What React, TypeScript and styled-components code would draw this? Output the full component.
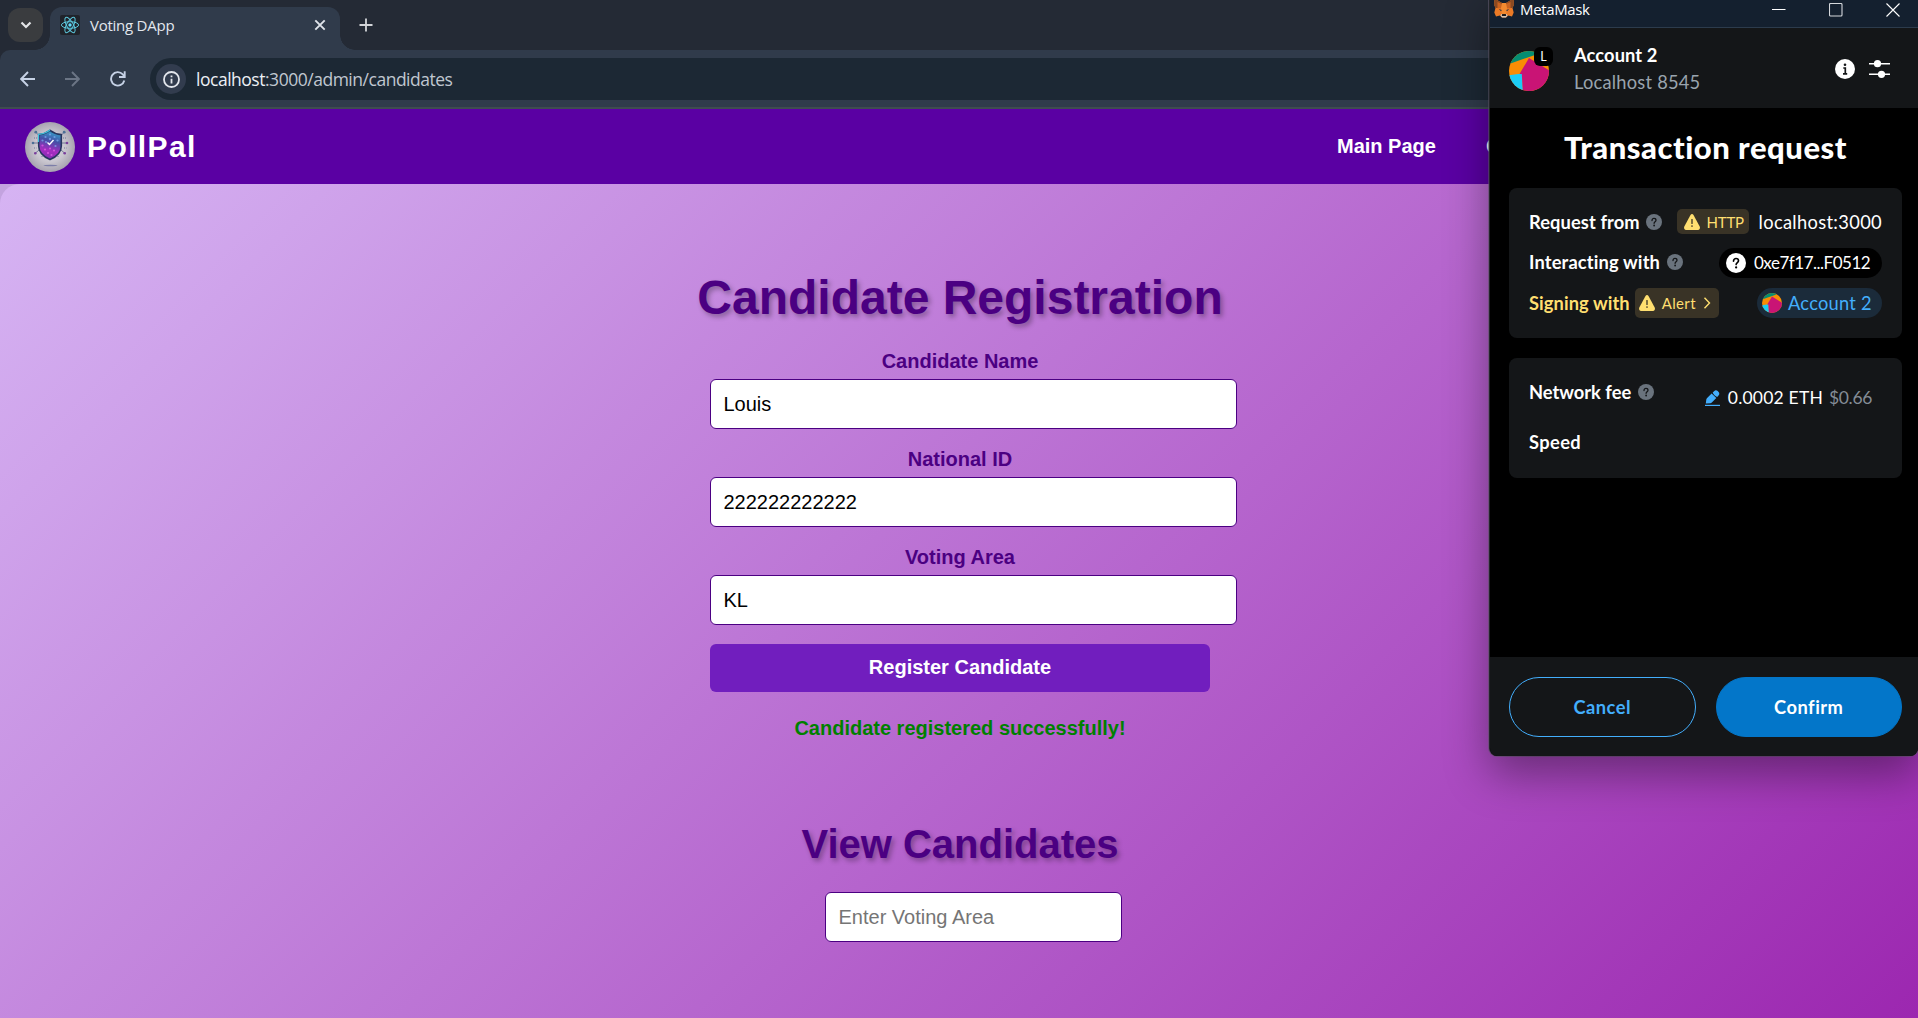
import React from 'react';
import styled, { createGlobalStyle } from 'styled-components';

const GlobalStyle = createGlobalStyle`
  * { box-sizing: border-box; }
  html, body { margin: 0; padding: 0; overflow: hidden; }
  body { font-family: "Liberation Sans", Arial, sans-serif; }
  svg { display: block; flex: none; }
`;

const Desktop = styled.div`
  position: relative;
  display: flex;
  flex-direction: column;
  width: 1918px;
  height: 1018px;
  overflow: hidden;
`;

/* ---------- browser ---------- */

const TabStrip = styled.div`
  display: flex;
  align-items: flex-start;
  height: 50px;
  padding-left: 8px;
  background: #242a35;
`;

const TabSearch = styled.button`
  display: grid;
  place-items: center;
  width: 35px;
  height: 34px;
  margin: 8px 7px 0 0;
  padding: 0;
  border: 0;
  border-radius: 12px;
  background: #3a3c3f;
`;

const Tab = styled.div`
  position: relative;
  display: flex;
  align-items: center;
  width: 290px;
  height: 43px;
  margin-top: 7px;
  padding: 0 12px 7px 10px;
  border-radius: 12px 12px 0 0;
  background: #303b4b;

  &::before,
  &::after {
    content: '';
    position: absolute;
    bottom: 0;
    width: 15px;
    height: 15px;
  }
  &::before {
    left: -15px;
    background: radial-gradient(circle at 0 0, transparent 14.5px, #303b4b 15px);
  }
  &::after {
    right: -15px;
    background: radial-gradient(circle at 100% 0, transparent 14.5px, #303b4b 15px);
  }
`;

const TabTitle = styled.span`
  flex: 1;
  margin-left: 10px;
  color: #e3e7ee;
  font: 400 15px/20px "Open Sans", sans-serif;
  letter-spacing: -0.25px;
`;

const NewTab = styled.span`
  margin: 18px 0 0 19px;
`;

const ToolbarBack = styled.div`
  background: #242a35;
`;

const Toolbar = styled.div`
  display: flex;
  align-items: center;
  height: 59px;
  padding: 1px 0 0 20px;
  border-bottom: 2px solid #3f4c50;
  border-radius: 10px 0 0 0;
  background: #303b4b;
`;

const ToolButton = styled.span`
  display: grid;
  place-items: center;
  width: 15px;
  height: 24px;
  margin-right: 30px;
`;

const AddressBar = styled.div`
  display: flex;
  flex: 1;
  align-items: center;
  height: 42px;
  margin-left: -5px;
  padding-left: 6px;
  border-radius: 21px 0 0 21px;
  background: #1c2834;
`;

const SiteInfo = styled.span`
  display: grid;
  place-items: center;
  width: 30px;
  height: 30px;
  margin-right: 10px;
  border-radius: 50%;
  background: #323c4e;
`;

const Url = styled.span`
  color: #c0c7d0;
  font: 400 17.5px/24px "Open Sans", sans-serif;
  letter-spacing: -0.48px;
`;

const UrlHost = styled.span`
  color: #eceff4;
`;

/* ---------- voting page ---------- */

const NavBar = styled.nav`
  display: flex;
  align-items: center;
  height: 75px;
  padding-left: 25px;
  background: #5a00a3;
`;

const Brand = styled.span`
  margin-left: 12px;
  color: #fff;
  font-size: 30px;
  font-weight: 700;
  line-height: 34px;
  letter-spacing: 1.4px;
`;

const NavLinks = styled.div`
  display: flex;
  gap: 50px;
  width: 581px;
  margin: 0 0 2px auto;
`;

const NavLink = styled.a`
  color: #fff;
  font-size: 20px;
  font-weight: 700;
  line-height: 24px;
`;

const PageBack = styled.div`
  flex: 1;
  background: #c3a3df;
`;

const Page = styled.main`
  display: flex;
  flex-direction: column;
  align-items: center;
  height: 834px;
  padding: 86px 0 0 2px;
  border-radius: 20px 0 0 0;
  background: linear-gradient(135deg, #d6b4f3 0%, #9c27b0 100%);
`;

const Heading = styled.h1<{ $size: number; $line: number }>`
  margin: 0;
  color: #4b0082;
  font-size: ${(p) => p.$size}px;
  font-weight: 700;
  line-height: ${(p) => p.$line}px;
  text-shadow: 2.5px 2.5px 5px rgba(0, 0, 0, 0.3);
`;

const Form = styled.form`
  display: flex;
  flex-direction: column;
  width: 500px;
  margin-top: 23px;
`;

const Label = styled.label`
  margin-bottom: 6px;
  color: #4b0082;
  font-size: 20px;
  font-weight: 700;
  line-height: 24px;
  text-align: center;
`;

const TextInput = styled.input<{ $width: number }>`
  width: ${(p) => p.$width}px;
  height: 50px;
  margin: 0 0 18px;
  padding: 0 12.5px;
  border: 1px solid #4b0082;
  border-radius: 6px;
  outline: 0;
  background: #fff;
  color: #000;
  font: 400 20px "Liberation Sans", Arial, sans-serif;

  &::placeholder { color: #757575; }
`;

const Submit = styled.button`
  height: 48px;
  margin-top: 1px;
  padding: 0 0 2px;
  border: 0;
  border-radius: 6px;
  background: #711ebe;
  color: #fff;
  font: 700 20px "Liberation Sans", Arial, sans-serif;
`;

const Success = styled.p`
  margin: 24px 0 81px;
  color: #008000;
  font-size: 20px;
  font-weight: 700;
  line-height: 24px;
`;

const Search = styled.div`
  width: 270px;
  margin-top: 25px;
`;

/* ---------- wallet window ---------- */

const Wallet = styled.section`
  position: absolute;
  top: 0;
  left: 1489px;
  display: flex;
  flex-direction: column;
  width: 429px;
  height: 756px;
  overflow: hidden;
  border-left: 1px solid #23252a;
  border-radius: 0 0 8px 8px;
  background: #000;
  color: #fff;
  font-family: Lato, sans-serif;
`;

/* the soft shadow the wallet window casts on the browser */
const WalletShadow = styled.div`
  position: absolute;
  top: -10px;
  left: 1489px;
  width: 429px;
  height: 766px;
  border-radius: 8px;
  box-shadow: 0 18px 44px rgba(0, 0, 0, 0.38), 0 0 0 1px rgba(110, 100, 120, 0.55);
`;

const TitleBar = styled.div`
  display: flex;
  align-items: flex-start;
  height: 28px;
  padding-left: 4px;
  border-bottom: 1px solid #2c3b4c;
  background: #14202f;
`;

const WindowTitle = styled.span`
  flex: 1;
  margin-left: 6px;
  font: 400 15px/19px "Open Sans", sans-serif;
  letter-spacing: -0.35px;
`;

const WindowControls = styled.div`
  display: flex;
  gap: 43px;
  padding: 3px 18px 0 0;
`;

const AccountBar = styled.header`
  display: flex;
  align-items: center;
  height: 80px;
  padding: 0 28px 0 19px;
  background: #141618;
`;

const AvatarBox = styled.div`
  position: relative;
  margin-top: 5px;
`;

const NetworkBadge = styled.span`
  position: absolute;
  top: -4px;
  left: 25px;
  display: grid;
  place-items: center;
  width: 19px;
  height: 19px;
  border-radius: 6px;
  background: #000;
  font-size: 12.5px;
  line-height: 19px;
`;

const AccountText = styled.div`
  display: flex;
  flex: 1;
  flex-direction: column;
  gap: 3px;
  margin-left: 25px;
`;

const HeaderIcons = styled.div`
  display: flex;
  align-items: center;
  gap: 14px;
  padding-top: 1px;
`;

const Text = styled.span<{
  $color?: string;
  $weight?: number;
  $size?: number;
  $track?: number;
}>`
  color: ${(p) => p.$color ?? '#fff'};
  font-size: ${(p) => p.$size ?? 18.3}px;
  font-weight: ${(p) => p.$weight ?? 400};
  line-height: 24px;
  letter-spacing: ${(p) => p.$track ?? 0.15}px;
  white-space: nowrap;
`;

const WalletBody = styled.div`
  display: flex;
  flex: 1;
  flex-direction: column;
  padding: 21px 16px 0 19px;
`;

const WalletHeading = styled.h2`
  margin: 0 0 23px;
  font-size: 31px;
  font-weight: 900;
  line-height: 36px;
  letter-spacing: 0.52px;
  text-align: center;
`;

const RequestCard = styled.div`
  display: grid;
  grid-template-rows: 31px 30px 30px;
  gap: 10px;
  height: 150px;
  padding: 19px 20px 0;
  border-radius: 8px;
  background: #141618;
`;

const CardRow = styled.div<{ $lift?: number }>`
  display: flex;
  align-items: center;
  justify-content: space-between;
  padding-bottom: ${(p) => p.$lift ?? 0}px;
`;

const LabelGroup = styled.div<{ $gap: number; $drop?: number }>`
  display: flex;
  align-items: center;
  gap: ${(p) => p.$gap}px;
  height: 24px;
  margin-bottom: ${(p) => 2 - (p.$drop ?? 0)}px;
`;

const ValueGroup = styled.div`
  display: flex;
  align-items: center;
  gap: 10px;
`;

const AlertChip = styled.span<{ $height: number; $width: number; $inset: number }>`
  display: flex;
  flex: none;
  align-items: center;
  gap: 7px;
  width: ${(p) => p.$width}px;
  height: ${(p) => p.$height}px;
  padding-left: ${(p) => p.$inset}px;
  border-radius: 5px;
  background: #393326;
`;

const Pill = styled.span<{ $bg: string; $left: number; $width: number; $gap: number }>`
  display: flex;
  align-items: center;
  gap: ${(p) => p.$gap}px;
  width: ${(p) => p.$width}px;
  height: 30px;
  padding-left: ${(p) => p.$left}px;
  border-radius: 15px;
  background: ${(p) => p.$bg};
`;

const FeeCard = styled.div`
  display: flex;
  flex-direction: column;
  gap: 26px;
  height: 120px;
  margin-top: 20px;
  padding: 22px 30px 0 20px;
  border-radius: 8px;
  background: #141618;
`;

const FeeRow = styled.div`
  display: flex;
  align-items: flex-start;
  justify-content: space-between;
  height: 24px;
`;

const FeeValue = styled.div`
  display: flex;
  align-items: center;
  margin-top: 6px;
`;

const FeeAmount = styled(Text)`
  margin: 0 6px 0 8px;
`;

const WalletFooter = styled.footer`
  display: flex;
  gap: 20px;
  height: 99px;
  padding: 20px 16px 0 19px;
  background: #141618;
`;

const WalletButton = styled.button<{ $primary?: boolean }>`
  flex: 1;
  height: 60px;
  padding: 0;
  border: 1px solid ${(p) => (p.$primary ? '#0376c9' : '#43aefc')};
  border-radius: 30px;
  background: ${(p) => (p.$primary ? '#0376c9' : 'transparent')};
  color: ${(p) => (p.$primary ? '#fff' : '#43aefc')};
  font: 700 18.3px/24px Lato, sans-serif;
  letter-spacing: 0.5px;
`;

/* ---------- drawings ---------- */

const ReactFavicon = () => (
  <svg width="20" height="20" viewBox="0 0 20 20">
    <rect width="20" height="20" rx="2" fill="#20232a" />
    <g fill="none" stroke="#5cc7dc" strokeWidth="1">
      <ellipse cx="10" cy="10" rx="8.6" ry="3.3" />
      <ellipse cx="10" cy="10" rx="8.6" ry="3.3" transform="rotate(60 10 10)" />
      <ellipse cx="10" cy="10" rx="8.6" ry="3.3" transform="rotate(120 10 10)" />
    </g>
    <circle cx="10" cy="10" r="1.7" fill="#61dafb" />
  </svg>
);

const PollPalLogo = () => (
  <svg width="50" height="50" viewBox="0 0 50 50">
    <defs>
      <radialGradient id="disc">
        <stop offset="0" stopColor="#e4e2e8" />
        <stop offset="0.6" stopColor="#c9c6cf" />
        <stop offset="1" stopColor="#a7a3b0" />
      </radialGradient>
      <linearGradient id="shield" x1="0.6" y1="0" x2="0.4" y2="1">
        <stop offset="0" stopColor="#35a9cf" />
        <stop offset="0.35" stopColor="#4450a6" />
        <stop offset="0.7" stopColor="#a52cc0" />
        <stop offset="1" stopColor="#7f2fb0" />
      </linearGradient>
    </defs>
    <circle cx="25" cy="25" r="25" fill="url(#disc)" />
    <g stroke="#5b6488" strokeWidth="0.8" fill="none">
      <path d="M15 14.5 L11 10.5 M35 14.5 L39 10.5 M13 21 H8 M37 21 H42 M14 28 L10.5 31 M36 28 L39.5 31" />
      <path d="M9 16h3M38 16h3M9 26h2.500M39 26h2.500M17 34v2M33 34v2" strokeDasharray="1 1" />
    </g>
    <g fill="#4c6f96">
      <circle cx="10.800" cy="10.200" r="1.400" />
      <circle cx="39.200" cy="10.200" r="1.400" />
      <circle cx="8" cy="21" r="1.300" />
    </g>
    <g fill="#7a3f9c">
      <circle cx="42" cy="21" r="1.300" />
      <circle cx="10.300" cy="31.200" r="1.300" />
      <circle cx="39.700" cy="31.200" r="1.300" />
    </g>
    <path d="M25 8.300 C28.500 11 32.500 12.200 36.300 12.600 V24 C36.300 30.500 31 35 25 37.600 C19 35 13.700 30.500 13.700 24 V12.600 C17.500 12.200 21.500 11 25 8.300Z" fill="url(#shield)" stroke="#26355f" strokeWidth="1.600" />
    <path d="M25 8 C21.500 10.800 17.500 12 13.500 12.400 V20" fill="none" stroke="#3ec2dc" strokeWidth="1.100" />
    <g fill="#7ea9ee" opacity="0.75">
      <circle cx="25" cy="12.500" r="1.100" />
      <circle cx="20.500" cy="15" r="1.100" />
      <circle cx="29.500" cy="15" r="1.100" />
      <circle cx="25" cy="17" r="1.200" />
      <circle cx="17.500" cy="18.500" r="1.100" />
      <circle cx="32.500" cy="18.500" r="1.100" />
      <circle cx="21" cy="20" r="1.100" />
      <circle cx="30.500" cy="24" r="1.100" />
    </g>
    <g fill="#e05be6" opacity="0.8">
      <circle cx="17.500" cy="23.500" r="1.100" />
      <circle cx="20" cy="27.500" r="1.100" />
      <circle cx="25" cy="26.500" r="1.100" />
      <circle cx="29" cy="28.500" r="1.100" />
      <circle cx="23" cy="31" r="1.100" />
      <circle cx="26.500" cy="33" r="1.100" />
    </g>
    <path d="M22.500 20.500l2 2 4-4.500" fill="none" stroke="#fff" strokeWidth="1.400" />
    <ellipse cx="25.500" cy="43.500" rx="7" ry="0.700" fill="#7c7ea8" />
  </svg>
);

const FoxIcon = () => (
  <svg width="20" height="18" viewBox="0 0 20 18">
    <path d="M0.500 0 L3 0 L8 3 H12 L17 0 H19.500 L20 4.500 L18.500 8 L19.700 12.500 L18 16.500 L14.200 15.500 L12 17.600 H8 L5.800 15.500 L2 16.500 L0.300 12.500 L1.500 8 L0 4.500Z" fill="#ea7a26" />
    <path d="M0.500 0 H3 L8 3 L7 8 L1.500 8 L0 4.500Z M19.500 0 H17 L12 3 L13 8 L18.500 8 L20 4.500Z" fill="#8a4a22" />
    <path d="M3.500 2 L8 4 L7 8.200 L3.500 8.200 Z M16.500 2 L12 4 L13 8.200 L16.500 8.200Z" fill="#c96421" />
    <path d="M8 3 H12 L13 8.200 L12 14 H8 L7 8.200Z" fill="#f28a30" />
    <path d="M4.800 9 L7.800 10 L7 11.300Z M15.200 9 L12.200 10 L13 11.300Z" fill="#23344a" />
    <path d="M7.500 14 H12.500 L13.500 15.600 L12 17.600 H8 L6.500 15.600Z" fill="#d6c6b8" />
    <path d="M8.200 14 H11.800 L12.200 16 H7.800Z" fill="#1d1a1a" />
  </svg>
);

const Jazzicon = ({ size, id }: { size: number; id: string }) => (
  <svg width={size} height={size} viewBox="0 0 40 40">
    <clipPath id={id}>
      <circle cx="20" cy="20" r="20" />
    </clipPath>
    <g clipPath={`url(#${id})`}>
      <rect width="40" height="40" fill="#f98d04" />
      <path d="M0 13 L26 4 L40 -4 L0 -4Z" fill="#058e72" />
      <path d="M-1 24.500 L13 22.500 L14 42 H-1Z" fill="#1ccdf5" />
      <path d="M10.500 23 L20 7 L42 20.500 V42 H14 L12.800 23Z" fill="#c91475" />
    </g>
  </svg>
);

const HelpIcon = ({ size = 16, bg = '#6a737d', fg = '#141618' }: { size?: number; bg?: string; fg?: string }) => (
  <svg width={size} height={size} viewBox="0 0 16 16">
    <circle cx="8" cy="8" r="8" fill={bg} />
    <path d="M6 6.500 C6 5.200 6.900 4.400 8 4.400 C9.200 4.400 10 5.200 10 6.200 C10 7.600 8.100 7.700 8.100 9.300" fill="none" stroke={fg} strokeWidth="1.300" strokeLinecap="round" />
    <circle cx="8.100" cy="11.500" r="0.900" fill={fg} />
  </svg>
);

const WarningIcon = () => (
  <svg width="16" height="16" viewBox="0 0 16 16">
    <path d="M6.500 0.900 C7.200 -0.300 8.800 -0.300 9.500 0.900 L15.700 12.600 C16.400 14.100 15.600 16 14 16 H2 C0.400 16 -0.400 14.100 0.300 12.600Z" fill="#ffdf70" />
    <path d="M8 5.600 V9.400" stroke="#393326" strokeWidth="1.300" strokeLinecap="round" />
    <circle cx="8" cy="12" r="0.850" fill="#393326" />
  </svg>
);

const EditIcon = () => (
  <svg width="15" height="16" viewBox="0 0 15 16">
    <path d="M0.800 13.600 L1.300 9.600 C1.400 9 1.700 8.500 2.100 8.100 L6.600 3.500 L11.300 8 L6.800 12.400 C6.400 12.800 5.900 13.100 5.300 13.200Z" fill="#43aefc" />
    <path d="M7.700 2.500 L9.300 0.900 C10.200 -0.100 11.700 0 12.700 1 L13.600 1.900 C14.500 2.900 14.600 4.300 13.700 5.300 L12.200 6.900 C10.200 6.200 8.500 4.600 7.700 2.500Z" fill="#43aefc" />
    <path d="M0 15.400 H15" stroke="#43aefc" strokeWidth="1.200" />
  </svg>
);

const NetworkSliders = () => (
  <svg width="21" height="20" viewBox="0 0 21 20" stroke="#fff" fill="#fff">
    <path d="M0 4.700 H21 M0 15.300 H21" strokeWidth="1.400" />
    <circle cx="8.500" cy="4.700" r="3.600" stroke="none" />
    <circle cx="12.500" cy="15.300" r="3.600" stroke="none" />
  </svg>
);

const InfoSolid = () => (
  <svg width="20" height="20" viewBox="0 0 20 20">
    <circle cx="10" cy="10" r="10" fill="#fff" />
    <circle cx="10" cy="5.800" r="1.300" fill="#141618" />
    <path d="M8.300 9 H10.300 V14.500 M8 14.800 H12.200" fill="none" stroke="#141618" strokeWidth="1.700" />
  </svg>
);

const Chrome = () => (
  <>
    <TabStrip>
      <TabSearch>
        <svg width="12" height="8" viewBox="0 0 12 8">
          <path d="M1.500 1.500 L6 6 L10.500 1.500" fill="none" stroke="#e3e5e8" strokeWidth="2.200" />
        </svg>
      </TabSearch>
      <Tab>
        <ReactFavicon />
        <TabTitle>Voting DApp</TabTitle>
        <svg width="16" height="12" viewBox="0 0 16 12">
          <path d="M3.300 1.300 L12.700 10.700 M12.700 1.300 L3.300 10.700" stroke="#dfe3ea" strokeWidth="1.900" />
        </svg>
      </Tab>
      <NewTab>
        <svg width="14" height="14" viewBox="0 0 14 14">
          <path d="M7 0.500 V13.500 M0.500 7 H13.500" stroke="#d3d5d9" strokeWidth="1.800" />
        </svg>
      </NewTab>
    </TabStrip>
    <ToolbarBack>
      <Toolbar>
        <ToolButton>
          <svg width="15" height="16" viewBox="0 0 15 16">
            <path d="M15 8 H1.500 M8 1 L1.200 8 L8 15" fill="none" stroke="#c6d2e6" strokeWidth="1.900" />
          </svg>
        </ToolButton>
        <ToolButton>
          <svg width="15" height="16" viewBox="0 0 15 16">
            <path d="M0 8 H13.500 M7 1 L13.800 8 L7 15" fill="none" stroke="#6b7585" strokeWidth="1.900" />
          </svg>
        </ToolButton>
        <ToolButton>
          <svg width="16" height="16" viewBox="0 0 16 16">
            <path d="M14.300 9.500 A6.700 6.700 0 1 1 12.800 3.400 L14.500 5.500" fill="none" stroke="#c6d2e6" strokeWidth="1.900" />
            <path d="M14.700 0.300 V6 H9" fill="none" stroke="#c6d2e6" strokeWidth="1.900" />
          </svg>
        </ToolButton>
        <AddressBar>
          <SiteInfo>
            <svg width="17" height="17" viewBox="0 0 17 17">
              <circle cx="8.500" cy="8.500" r="7.500" fill="none" stroke="#e3e6ec" strokeWidth="1.800" />
              <path d="M8.500 7.700 V12.500 M8.500 4.400 V6.200" stroke="#e3e6ec" strokeWidth="1.800" />
            </svg>
          </SiteInfo>
          <Url>
            <UrlHost>localhost</UrlHost>:3000/admin/candidates
          </Url>
        </AddressBar>
      </Toolbar>
    </ToolbarBack>
  </>
);

const fields = [
  { label: 'Candidate Name', value: 'Louis' },
  { label: 'National ID', value: '222222222222' },
  { label: 'Voting Area', value: 'KL' },
];

const VotingPage = () => (
  <>
    <NavBar>
      <PollPalLogo />
      <Brand>PollPal</Brand>
      <NavLinks>
        <NavLink>Main Page</NavLink>
        <NavLink>C</NavLink>
      </NavLinks>
    </NavBar>
    <PageBack>
      <Page>
        <Heading $size={48} $line={56}>Candidate Registration</Heading>
        <Form>
          {fields.map((f) => (
            <React.Fragment key={f.label}>
              <Label>{f.label}</Label>
              <TextInput $width={527} defaultValue={f.value} />
            </React.Fragment>
          ))}
          <Submit type="button">Register Candidate</Submit>
        </Form>
        <Success>Candidate registered successfully!</Success>
        <Heading as="h2" $size={40} $line={46}>View Candidates</Heading>
        <Search>
          <TextInput $width={297} placeholder="Enter Voting Area" />
        </Search>
      </Page>
    </PageBack>
  </>
);

const MetaMaskWindow = () => (
  <Wallet>
    <TitleBar>
      <FoxIcon />
      <WindowTitle>MetaMask</WindowTitle>
      <WindowControls>
        <svg width="14" height="14" viewBox="0 0 14 14">
          <path d="M0 6.500 H13.500" stroke="#fff" strokeWidth="1" />
        </svg>
        <svg width="14" height="14" viewBox="0 0 14 14">
          <rect x="0.500" y="0.500" width="12.500" height="12.500" rx="1" fill="none" stroke="#d5d8dc" strokeWidth="1.100" />
        </svg>
        <svg width="14" height="14" viewBox="0 0 14 14">
          <path d="M0.500 0.500 L13.500 13.500 M13.500 0.500 L0.500 13.500" stroke="#fff" strokeWidth="1.100" />
        </svg>
      </WindowControls>
    </TitleBar>
    <AccountBar>
      <AvatarBox>
        <Jazzicon size={40} id="avatar-large" />
        <NetworkBadge>L</NetworkBadge>
      </AvatarBox>
      <AccountText>
        <Text $weight={700} $track={0.1}>Account 2</Text>
        <Text $color="#9aa4ae" $track={0.22}>Localhost 8545</Text>
      </AccountText>
      <HeaderIcons>
        <InfoSolid />
        <NetworkSliders />
      </HeaderIcons>
    </AccountBar>
    <WalletBody>
      <WalletHeading>Transaction request</WalletHeading>
      <RequestCard>
        <CardRow $lift={2}>
          <LabelGroup $gap={6} $drop={2}>
            <Text $weight={700} $track={0.1}>Request from</Text>
            <HelpIcon />
          </LabelGroup>
          <ValueGroup>
            <AlertChip $height={25} $width={72} $inset={7}>
              <WarningIcon />
              <Text $color="#ffdf70" $size={15} $track={-0.2}>HTTP</Text>
            </AlertChip>
            <Text $track={0.33}>localhost:3000</Text>
          </ValueGroup>
        </CardRow>
        <CardRow>
          <LabelGroup $gap={7}>
            <Text $weight={700}>Interacting with</Text>
            <HelpIcon />
          </LabelGroup>
          <Pill $bg="#000" $left={7} $width={163} $gap={8}>
            <HelpIcon size={20} bg="#fff" fg="#000" />
            <Text $size={17} $track={-0.49}>0xe7f17...F0512</Text>
          </Pill>
        </CardRow>
        <CardRow>
          <LabelGroup $gap={5} $drop={2}>
            <Text $weight={700} $color="#ffdf70" $track={0.08}>Signing with</Text>
            <AlertChip $height={30} $width={84} $inset={4}>
              <WarningIcon />
              <Text $color="#ffdf70" $size={15} $track={0.36}>Alert</Text>
              <svg width="8" height="12" viewBox="0 0 8 12">
                <path d="M1.500 0.800 L6.500 6 L1.500 11.200" fill="none" stroke="#ffdf70" strokeWidth="1.400" />
              </svg>
            </AlertChip>
          </LabelGroup>
          <Pill $bg="#1b2b3a" $left={5} $width={125} $gap={6}>
            <Jazzicon size={20} id="avatar-small" />
            <Text $color="#43aefc" $track={0.22}>Account 2</Text>
          </Pill>
        </CardRow>
      </RequestCard>
      <FeeCard>
        <FeeRow>
          <LabelGroup $gap={7}>
            <Text $weight={700} $track={0}>Network fee</Text>
            <HelpIcon />
          </LabelGroup>
          <FeeValue>
            <EditIcon />
            <FeeAmount $size={17.5} $track={0.2}>0.0002 ETH</FeeAmount>
            <Text $color="#848c96" $size={17.5} $track={-0.35}>$0.66</Text>
          </FeeValue>
        </FeeRow>
        <FeeRow>
          <Text $weight={700} $track={0.4}>Speed</Text>
        </FeeRow>
      </FeeCard>
    </WalletBody>
    <WalletFooter>
      <WalletButton>Cancel</WalletButton>
      <WalletButton $primary>Confirm</WalletButton>
    </WalletFooter>
  </Wallet>
);

export default function App() {
  return (
    <Desktop>
      <GlobalStyle />
      <Chrome />
      <VotingPage />
      <WalletShadow />
      <MetaMaskWindow />
    </Desktop>
  );
}
